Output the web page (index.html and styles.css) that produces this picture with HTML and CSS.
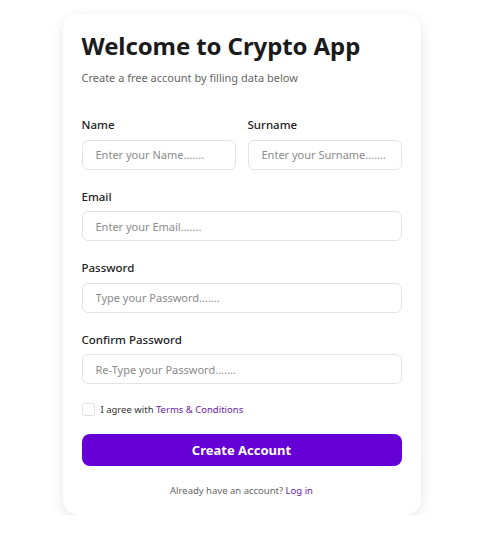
FILE: index.html
```html
<!DOCTYPE html>
<html lang="en">
<head>
<meta charset="utf-8">
<title>Crypto App - Sign up</title>
<link rel="stylesheet" href="styles.css">
</head>
<body>
<main class="card">
  <h1 class="title">Welcome to Crypto App</h1>
  <p class="subtitle">Create a free account by filling data below</p>
  <form class="form">
    <div class="row">
      <label class="field">
        <span class="label">Name</span>
        <input class="input" type="text" placeholder="Enter your Name.......">
      </label>
      <label class="field">
        <span class="label">Surname</span>
        <input class="input" type="text" placeholder="Enter your Surname.......">
      </label>
    </div>
    <label class="field">
      <span class="label">Email</span>
      <input class="input" type="email" placeholder="Enter your Email.......">
    </label>
    <label class="field">
      <span class="label">Password</span>
      <input class="input" type="password" placeholder="Type your Password.......">
    </label>
    <label class="field">
      <span class="label">Confirm Password</span>
      <input class="input" type="password" placeholder="Re-Type your Password.......">
    </label>
    <label class="agree">
      <span class="box"></span>
      <span>I agree with <a class="link" href="#">Terms &amp; Conditions</a></span>
    </label>
    <button class="btn" type="button">Create Account</button>
    <p class="footer">Already have an account? <a class="link" href="#">Log in</a></p>
  </form>
</main>
</body>
</html>
```
FILE: styles.css
```css
* { box-sizing: border-box; }
html, body { margin: 0; padding: 0; background: #fff; }
body {
  font-family: "Noto Sans", "Open Sans", sans-serif;
  color: #1a1a1a;
  padding: 14px 0 0 2px;
}
.card {
  width: 358px;
  margin: 0 auto;
  background: #fff;
  border-radius: 16px;
  box-shadow: 0 4px 14px rgba(0,0,0,0.10);
  padding: 16px 19px 17px 19px;
}
.title {
  margin: 0;
  font-size: 24px;
  line-height: 32px;
  font-weight: 700;
  color: #1b1b1b;
  letter-spacing: -0.1px;
}
.subtitle {
  margin: 8px 0 0;
  font-size: 11px;
  line-height: 16px;
  color: #666;
}
.form {
  margin-top: 30px;
  display: flex;
  flex-direction: column;
  gap: 18px;
}
.row {
  display: grid;
  grid-template-columns: 1fr 1fr;
  gap: 12px;
}
.field {
  display: flex;
  flex-direction: column;
  gap: 6.5px;
}
.label {
  font-size: 11.5px;
  line-height: 17px;
  font-weight: 500;
  color: #222;
}
.input {
  height: 30px;
  width: 100%;
  border: 1px solid #e4e4e7;
  border-radius: 6px;
  padding: 0 13px;
  font-family: inherit;
  font-size: 11px;
  color: #333;
  background: #fff;
  outline: none;
}
.input::placeholder { color: #8a8a8a; }
.agree {
  display: flex;
  align-items: center;
  gap: 6px;
  font-size: 9.5px;
  line-height: 13px;
  color: #333;
  margin-top: 1px;
}
.box {
  width: 13px;
  height: 13px;
  border: 1px solid #e2e2e2;
  border-radius: 2px;
  background: #fff;
}
.link {
  color: #6a1ba8;
  text-decoration: none;
}
.btn {
  height: 32px;
  width: 100%;
  border: none;
  border-radius: 8px;
  background: #6400d6;
  color: #fff;
  font-family: inherit;
  font-size: 13px;
  font-weight: 700;
  cursor: pointer;
}
.footer {
  margin: 0;
  text-align: center;
  font-size: 9.5px;
  line-height: 14px;
  color: #666;
}
```
